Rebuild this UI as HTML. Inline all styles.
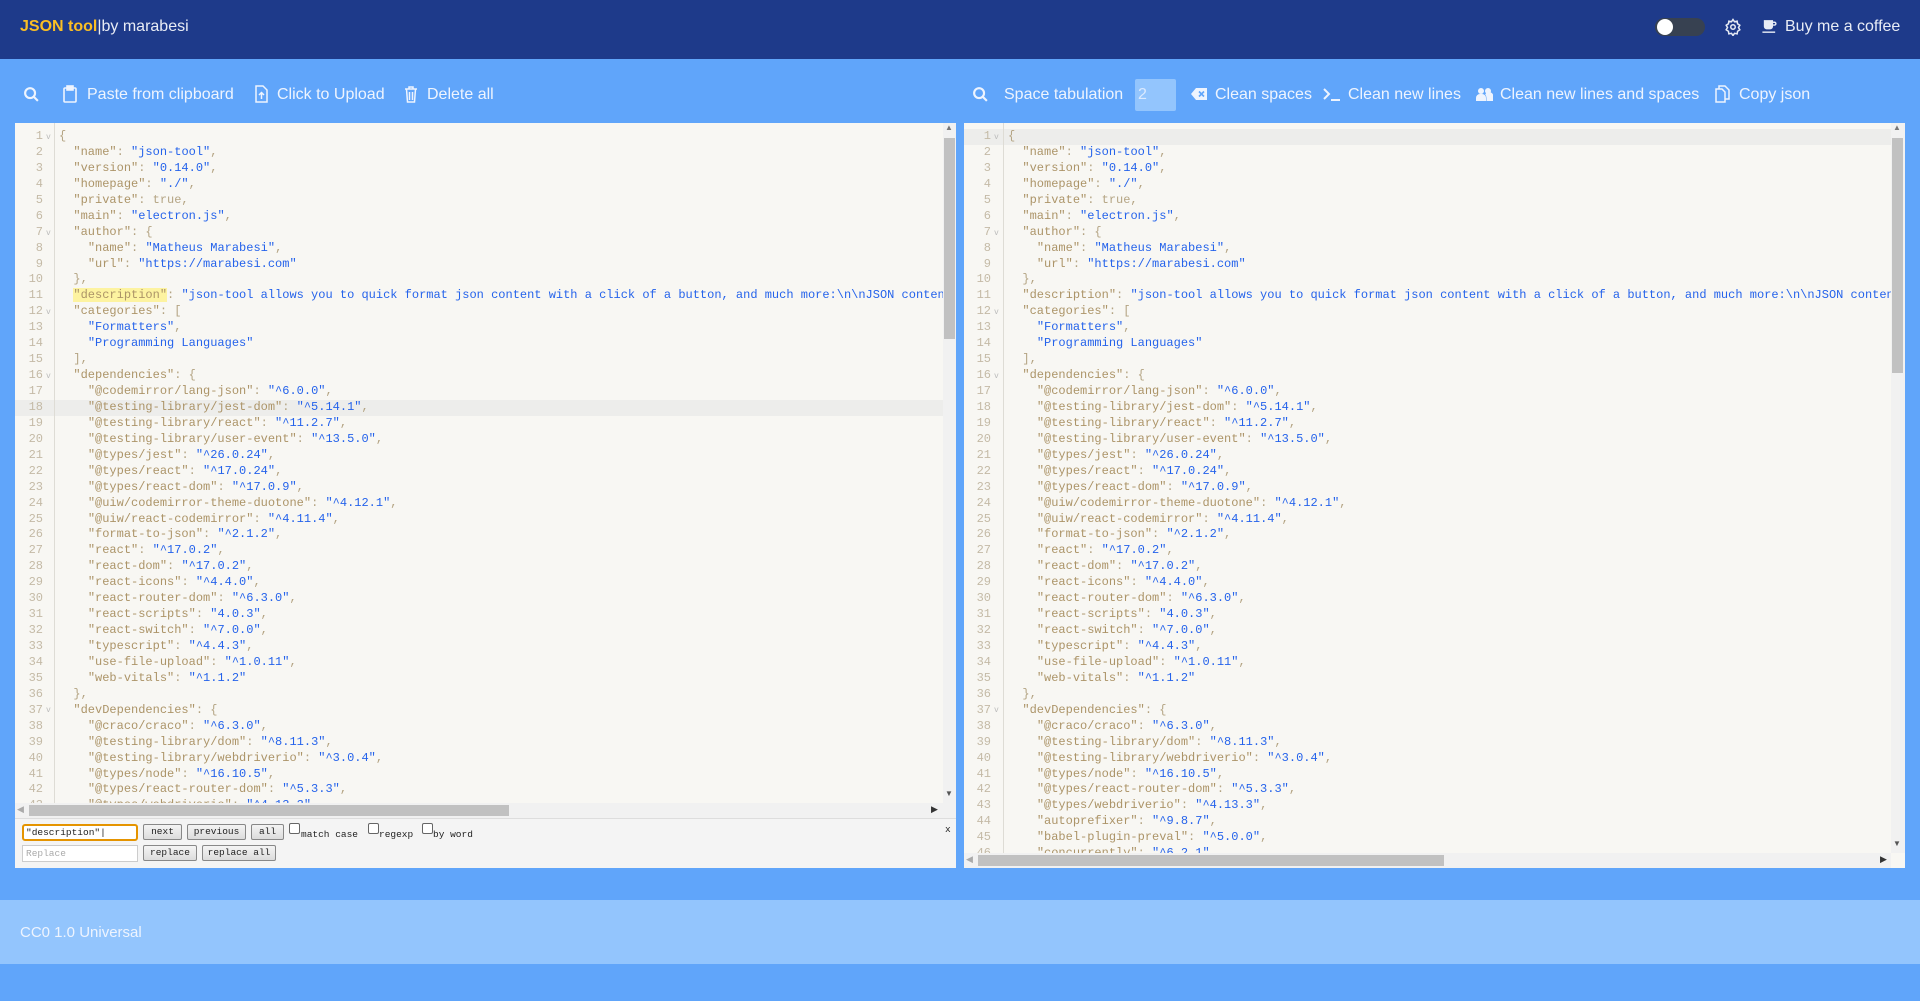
<!DOCTYPE html>
<html><head><meta charset="utf-8"><style>
*{box-sizing:border-box;margin:0;padding:0}
body{width:1920px;height:1001px;background:#60a5fa;font-family:"Liberation Sans",sans-serif;position:relative;overflow:hidden}
.hdr{position:absolute;left:0;top:0;width:1920px;height:59px;background:#1e3a8a}
.t{position:absolute;white-space:nowrap}
.tb{color:#eef4fe;font-size:16px}
.ed{position:absolute;top:123px;background:#f8f7f3;overflow:hidden}
.gut{position:absolute;top:0;bottom:0;border-right:1px solid #dedcd5;background:#f8f7f3}
.ln{position:absolute;top:6px;text-align:right;font-family:"Liberation Mono",monospace;font-size:12px;line-height:15.93px;color:#c4baa6}
.code{position:absolute;top:6px;font-family:"Liberation Mono",monospace;font-size:12px;line-height:15.93px;color:#b4a483;white-space:pre;overflow:hidden}
.k{color:#ac9468}.s{color:#2563eb}
.fold{position:absolute;font-family:"Liberation Mono",monospace;font-size:8px;color:#bbb}
.act{position:absolute;height:15.93px;background:#ededeb}
.hl{background:#fdf3a0}
.vs{position:absolute;background:#c1c1c1}
.btn{position:absolute;height:16px;border:1px solid #888;background:linear-gradient(#f4f4f4,#dcdcdc);font-family:"Liberation Mono",monospace;font-size:9.5px;line-height:14px;text-align:center;color:#222;border-radius:2px}
.cb{position:absolute;width:11px;height:11px;border:1px solid #666;border-radius:2px;background:#fff}
.sm{position:absolute;font-family:"Liberation Mono",monospace;font-size:9.5px;color:#222}
</style></head><body>
<div class="hdr"></div>
<div class="t" style="left:20px;top:18px;font-size:16px;color:#fbbf24;font-weight:bold">JSON tool<span style="color:#e8ecf5;font-weight:normal">|by marabesi</span></div>
<div style="position:absolute;left:1655px;top:18px;width:50px;height:18px;border-radius:9px;background:#374151"></div>
<div style="position:absolute;left:1657px;top:19px;width:16px;height:16px;border-radius:8px;background:#fff"></div>
<svg style="position:absolute;left:1724px;top:18px" width="18" height="18" viewBox="0 0 24 24" fill="none" stroke="#e8ecf5" stroke-width="2"><circle cx="12" cy="12" r="3"/><path d="M12 2l2 3 3.5-.8.6 3.5 3 2-1.8 3 1.8 3-3 2-.6 3.5-3.5-.8-2 3-2-3-3.5.8-.6-3.5-3-2 1.8-3-1.8-3 3-2 .6-3.5 3.5.8z"/></svg>
<svg style="position:absolute;left:1761px;top:18px" width="17" height="17" viewBox="0 0 24 24" fill="#e8ecf5"><path d="M4 3h13v9a4 4 0 0 1-4 4H8a4 4 0 0 1-4-4z"/><path d="M17 5h2a3 3 0 0 1 0 6h-2v-2h2a1 1 0 0 0 0-2h-2z"/><rect x="2" y="19" width="18" height="2"/></svg>
<div class="t" style="left:1785px;top:18px;font-size:16px;color:#e8ecf5">Buy me a coffee</div>

<svg style="position:absolute;left:23px;top:86px" width="17" height="17" viewBox="0 0 24 24" fill="none" stroke="#eef4fe" stroke-width="3"><circle cx="10" cy="10" r="7"/><path d="M15 15l6 6"/></svg>
<svg style="position:absolute;left:63px;top:85px" width="14" height="18" viewBox="0 0 14 18" fill="none" stroke="#eef4fe" stroke-width="1.6"><rect x="1" y="3" width="12" height="14" rx="1"/><rect x="4" y="1" width="6" height="4" fill="#eef4fe"/></svg>
<div class="t tb" style="left:87px;top:86px">Paste from clipboard</div>
<svg style="position:absolute;left:255px;top:85px" width="13" height="18" viewBox="0 0 13 18" fill="none" stroke="#eef4fe" stroke-width="1.5"><path d="M1 1h7l4 4v12H1z"/><path d="M6.5 14V8M4 10l2.5-2.5L9 10"/></svg>
<div class="t tb" style="left:277px;top:86px">Click to Upload</div>
<svg style="position:absolute;left:404px;top:85px" width="14" height="18" viewBox="0 0 14 18" fill="none" stroke="#eef4fe" stroke-width="1.5"><path d="M1 4h12M5 4V2h4v2M2.5 4l1 13h7l1-13M5.5 7v8M8.5 7v8"/></svg>
<div class="t tb" style="left:427px;top:86px">Delete all</div>

<svg style="position:absolute;left:972px;top:86px" width="17" height="17" viewBox="0 0 24 24" fill="none" stroke="#eef4fe" stroke-width="3"><circle cx="10" cy="10" r="7"/><path d="M15 15l6 6"/></svg>
<div class="t tb" style="left:1004px;top:86px">Space tabulation</div>
<div style="position:absolute;left:1135px;top:79px;width:41px;height:32px;background:#93c5fd;border-radius:2px"></div>
<div class="t tb" style="left:1138px;top:86px;color:#dbeafe">2</div>
<svg style="position:absolute;left:1191px;top:88px" width="16" height="12" viewBox="0 0 16 12"><path d="M5 0h11v12H5L0 6z" fill="#eef4fe"/><path d="M8 3.5l5 5M13 3.5l-5 5" stroke="#60a5fa" stroke-width="1.6"/></svg>
<div class="t tb" style="left:1215px;top:86px">Clean spaces</div>
<svg style="position:absolute;left:1323px;top:87px" width="18" height="15" viewBox="0 0 18 15" fill="none" stroke="#eef4fe" stroke-width="2"><path d="M1 2l5 5-5 5M8 13h9"/></svg>
<div class="t tb" style="left:1348px;top:86px">Clean new lines</div>
<svg style="position:absolute;left:1476px;top:87px" width="17" height="14" viewBox="0 0 17 14" fill="#eef4fe"><circle cx="5" cy="4" r="3"/><circle cx="12" cy="4" r="3"/><path d="M0 14v-3a4 4 0 0 1 4-4h2a4 4 0 0 1 4 4v3zM10.5 14v-3a5 5 0 0 0-1.3-3.5A4 4 0 0 1 17 11v3z"/></svg>
<div class="t tb" style="left:1500px;top:86px">Clean new lines and spaces</div>
<svg style="position:absolute;left:1715px;top:85px" width="15" height="18" viewBox="0 0 15 18" fill="none" stroke="#eef4fe" stroke-width="1.5"><path d="M4 4V1h6l4 4v9h-4"/><path d="M1 4h6l3 3v10H1z"/></svg>
<div class="t tb" style="left:1739px;top:86px">Copy json</div>

<!-- left editor -->
<div class="ed" style="left:15px;width:941px;height:745px">
 <div class="act" style="left:0;width:928px;top:277px"></div>
 <div class="gut" style="left:0;width:40px;height:680px;background:transparent"></div>
 <div class="ln" style="left:0;width:28px">1<br>2<br>3<br>4<br>5<br>6<br>7<br>8<br>9<br>10<br>11<br>12<br>13<br>14<br>15<br>16<br>17<br>18<br>19<br>20<br>21<br>22<br>23<br>24<br>25<br>26<br>27<br>28<br>29<br>30<br>31<br>32<br>33<br>34<br>35<br>36<br>37<br>38<br>39<br>40<br>41<br>42<br>43</div>
 <div class="fold" style="left:31px;top:10px">v</div>
 <div class="fold" style="left:31px;top:106px">v</div>
 <div class="fold" style="left:31px;top:185px">v</div>
 <div class="fold" style="left:31px;top:249px">v</div>
 <div class="fold" style="left:31px;top:583px">v</div>
 <div class="code" style="left:44px;width:884px;height:674px">{
  <span class="k">"name"</span>: <span class="s">"json-tool"</span>,
  <span class="k">"version"</span>: <span class="s">"0.14.0"</span>,
  <span class="k">"homepage"</span>: <span class="s">"./"</span>,
  <span class="k">"private"</span>: true,
  <span class="k">"main"</span>: <span class="s">"electron.js"</span>,
  <span class="k">"author"</span>: {
    <span class="k">"name"</span>: <span class="s">"Matheus Marabesi"</span>,
    <span class="k">"url"</span>: <span class="s">"https://marabesi.com"</span>
  },
  <span class="k hl">"description"</span>: <span class="s">"json-tool allows you to quick format json content with a click of a button, and much more:\n\nJSON content here"</span>,
  <span class="k">"categories"</span>: [
    <span class="s">"Formatters"</span>,
    <span class="s">"Programming Languages"</span>
  ],
  <span class="k">"dependencies"</span>: {
    <span class="k">"@codemirror/lang-json"</span>: <span class="s">"^6.0.0"</span>,
    <span class="k">"@testing-library/jest-dom"</span>: <span class="s">"^5.14.1"</span>,
    <span class="k">"@testing-library/react"</span>: <span class="s">"^11.2.7"</span>,
    <span class="k">"@testing-library/user-event"</span>: <span class="s">"^13.5.0"</span>,
    <span class="k">"@types/jest"</span>: <span class="s">"^26.0.24"</span>,
    <span class="k">"@types/react"</span>: <span class="s">"^17.0.24"</span>,
    <span class="k">"@types/react-dom"</span>: <span class="s">"^17.0.9"</span>,
    <span class="k">"@uiw/codemirror-theme-duotone"</span>: <span class="s">"^4.12.1"</span>,
    <span class="k">"@uiw/react-codemirror"</span>: <span class="s">"^4.11.4"</span>,
    <span class="k">"format-to-json"</span>: <span class="s">"^2.1.2"</span>,
    <span class="k">"react"</span>: <span class="s">"^17.0.2"</span>,
    <span class="k">"react-dom"</span>: <span class="s">"^17.0.2"</span>,
    <span class="k">"react-icons"</span>: <span class="s">"^4.4.0"</span>,
    <span class="k">"react-router-dom"</span>: <span class="s">"^6.3.0"</span>,
    <span class="k">"react-scripts"</span>: <span class="s">"4.0.3"</span>,
    <span class="k">"react-switch"</span>: <span class="s">"^7.0.0"</span>,
    <span class="k">"typescript"</span>: <span class="s">"^4.4.3"</span>,
    <span class="k">"use-file-upload"</span>: <span class="s">"^1.0.11"</span>,
    <span class="k">"web-vitals"</span>: <span class="s">"^1.1.2"</span>
  },
  <span class="k">"devDependencies"</span>: {
    <span class="k">"@craco/craco"</span>: <span class="s">"^6.3.0"</span>,
    <span class="k">"@testing-library/dom"</span>: <span class="s">"^8.11.3"</span>,
    <span class="k">"@testing-library/webdriverio"</span>: <span class="s">"^3.0.4"</span>,
    <span class="k">"@types/node"</span>: <span class="s">"^16.10.5"</span>,
    <span class="k">"@types/react-router-dom"</span>: <span class="s">"^5.3.3"</span>,
    <span class="k">"@types/webdriverio"</span>: <span class="s">"^4.13.3"</span>,</div>
 <div style="position:absolute;left:928px;top:0;width:13px;height:680px;background:#f1f1f1"></div>
 <div class="vs" style="left:929px;top:15px;width:11px;height:201px"></div>
 <div class="t" style="left:930px;top:0px;font-size:8px;color:#777">▲</div>
 <div class="t" style="left:930px;top:666px;font-size:8px;color:#555">▼</div>
 <div style="position:absolute;left:0;top:680px;width:941px;height:15px;background:#f1f1f1"></div>
 <div class="vs" style="left:14px;top:682px;width:480px;height:11px"></div>
 <div class="t" style="left:2px;top:681px;font-size:9px;color:#aaa">◀</div>
 <div class="t" style="left:916px;top:681px;font-size:9px;color:#333">▶</div>
 <div style="position:absolute;left:0;top:695px;width:941px;height:50px;background:#f4f4f4;border-top:1px solid #ddd"></div>
 <div style="position:absolute;left:7px;top:701px;width:116px;height:17px;border:2px solid #e59400;border-radius:3px;background:#fff"></div>
 <div class="sm" style="left:11px;top:704px">"description"|</div>
 <div style="position:absolute;left:7px;top:722px;width:116px;height:17px;border:1px solid #ccc;background:#fff"></div>
 <div class="sm" style="left:11px;top:725px;color:#aaa">Replace</div>
 <div class="btn" style="left:128px;top:701px;width:39px">next</div>
 <div class="btn" style="left:172px;top:701px;width:59px">previous</div>
 <div class="btn" style="left:236px;top:701px;width:33px">all</div>
 <div class="cb" style="left:274px;top:700px"></div><div class="sm" style="left:286px;top:706px">match case</div>
 <div class="cb" style="left:353px;top:700px"></div><div class="sm" style="left:364px;top:706px">regexp</div>
 <div class="cb" style="left:407px;top:700px"></div><div class="sm" style="left:418px;top:706px">by word</div>
 <div class="sm" style="left:930px;top:701px">x</div>
 <div class="btn" style="left:128px;top:722px;width:54px">replace</div>
 <div class="btn" style="left:187px;top:722px;width:74px">replace all</div>
</div>

<!-- right editor -->
<div class="ed" style="left:964px;width:941px;height:745px">
 <div class="act" style="left:0;width:927px;top:6px"></div>
 <div class="gut" style="left:0;width:40px;height:730px;background:transparent"></div>
 <div class="ln" style="left:0;width:27px">1<br>2<br>3<br>4<br>5<br>6<br>7<br>8<br>9<br>10<br>11<br>12<br>13<br>14<br>15<br>16<br>17<br>18<br>19<br>20<br>21<br>22<br>23<br>24<br>25<br>26<br>27<br>28<br>29<br>30<br>31<br>32<br>33<br>34<br>35<br>36<br>37<br>38<br>39<br>40<br>41<br>42<br>43<br>44<br>45<br>46</div>
 <div class="fold" style="left:30px;top:10px">v</div>
 <div class="fold" style="left:30px;top:106px">v</div>
 <div class="fold" style="left:30px;top:185px">v</div>
 <div class="fold" style="left:30px;top:249px">v</div>
 <div class="fold" style="left:30px;top:583px">v</div>
 <div class="code" style="left:44px;width:883px;height:724px">{
  <span class="k">"name"</span>: <span class="s">"json-tool"</span>,
  <span class="k">"version"</span>: <span class="s">"0.14.0"</span>,
  <span class="k">"homepage"</span>: <span class="s">"./"</span>,
  <span class="k">"private"</span>: true,
  <span class="k">"main"</span>: <span class="s">"electron.js"</span>,
  <span class="k">"author"</span>: {
    <span class="k">"name"</span>: <span class="s">"Matheus Marabesi"</span>,
    <span class="k">"url"</span>: <span class="s">"https://marabesi.com"</span>
  },
  <span class="k">"description"</span>: <span class="s">"json-tool allows you to quick format json content with a click of a button, and much more:\n\nJSON content here"</span>,
  <span class="k">"categories"</span>: [
    <span class="s">"Formatters"</span>,
    <span class="s">"Programming Languages"</span>
  ],
  <span class="k">"dependencies"</span>: {
    <span class="k">"@codemirror/lang-json"</span>: <span class="s">"^6.0.0"</span>,
    <span class="k">"@testing-library/jest-dom"</span>: <span class="s">"^5.14.1"</span>,
    <span class="k">"@testing-library/react"</span>: <span class="s">"^11.2.7"</span>,
    <span class="k">"@testing-library/user-event"</span>: <span class="s">"^13.5.0"</span>,
    <span class="k">"@types/jest"</span>: <span class="s">"^26.0.24"</span>,
    <span class="k">"@types/react"</span>: <span class="s">"^17.0.24"</span>,
    <span class="k">"@types/react-dom"</span>: <span class="s">"^17.0.9"</span>,
    <span class="k">"@uiw/codemirror-theme-duotone"</span>: <span class="s">"^4.12.1"</span>,
    <span class="k">"@uiw/react-codemirror"</span>: <span class="s">"^4.11.4"</span>,
    <span class="k">"format-to-json"</span>: <span class="s">"^2.1.2"</span>,
    <span class="k">"react"</span>: <span class="s">"^17.0.2"</span>,
    <span class="k">"react-dom"</span>: <span class="s">"^17.0.2"</span>,
    <span class="k">"react-icons"</span>: <span class="s">"^4.4.0"</span>,
    <span class="k">"react-router-dom"</span>: <span class="s">"^6.3.0"</span>,
    <span class="k">"react-scripts"</span>: <span class="s">"4.0.3"</span>,
    <span class="k">"react-switch"</span>: <span class="s">"^7.0.0"</span>,
    <span class="k">"typescript"</span>: <span class="s">"^4.4.3"</span>,
    <span class="k">"use-file-upload"</span>: <span class="s">"^1.0.11"</span>,
    <span class="k">"web-vitals"</span>: <span class="s">"^1.1.2"</span>
  },
  <span class="k">"devDependencies"</span>: {
    <span class="k">"@craco/craco"</span>: <span class="s">"^6.3.0"</span>,
    <span class="k">"@testing-library/dom"</span>: <span class="s">"^8.11.3"</span>,
    <span class="k">"@testing-library/webdriverio"</span>: <span class="s">"^3.0.4"</span>,
    <span class="k">"@types/node"</span>: <span class="s">"^16.10.5"</span>,
    <span class="k">"@types/react-router-dom"</span>: <span class="s">"^5.3.3"</span>,
    <span class="k">"@types/webdriverio"</span>: <span class="s">"^4.13.3"</span>,
    <span class="k">"autoprefixer"</span>: <span class="s">"^9.8.7"</span>,
    <span class="k">"babel-plugin-preval"</span>: <span class="s">"^5.0.0"</span>,
    <span class="k">"concurrently"</span>: <span class="s">"^6.2.1"</span>,</div>
 <div style="position:absolute;left:927px;top:0;width:14px;height:730px;background:#f1f1f1"></div>
 <div class="vs" style="left:928px;top:15px;width:11px;height:235px"></div>
 <div class="t" style="left:929px;top:0px;font-size:8px;color:#777">▲</div>
 <div class="t" style="left:929px;top:716px;font-size:8px;color:#555">▼</div>
 <div style="position:absolute;left:0;top:730px;width:927px;height:15px;background:#f1f1f1"></div>
 <div class="vs" style="left:14px;top:732px;width:466px;height:11px"></div>
 <div class="t" style="left:2px;top:731px;font-size:9px;color:#aaa">◀</div>
 <div class="t" style="left:916px;top:731px;font-size:9px;color:#333">▶</div>
</div>

<div style="position:absolute;left:0;top:900px;width:1920px;height:64px;background:#93c5fd"></div>
<div class="t" style="left:20px;top:924px;font-size:15px;color:#eef4fe">CC0 1.0 Universal</div>
</body></html>
